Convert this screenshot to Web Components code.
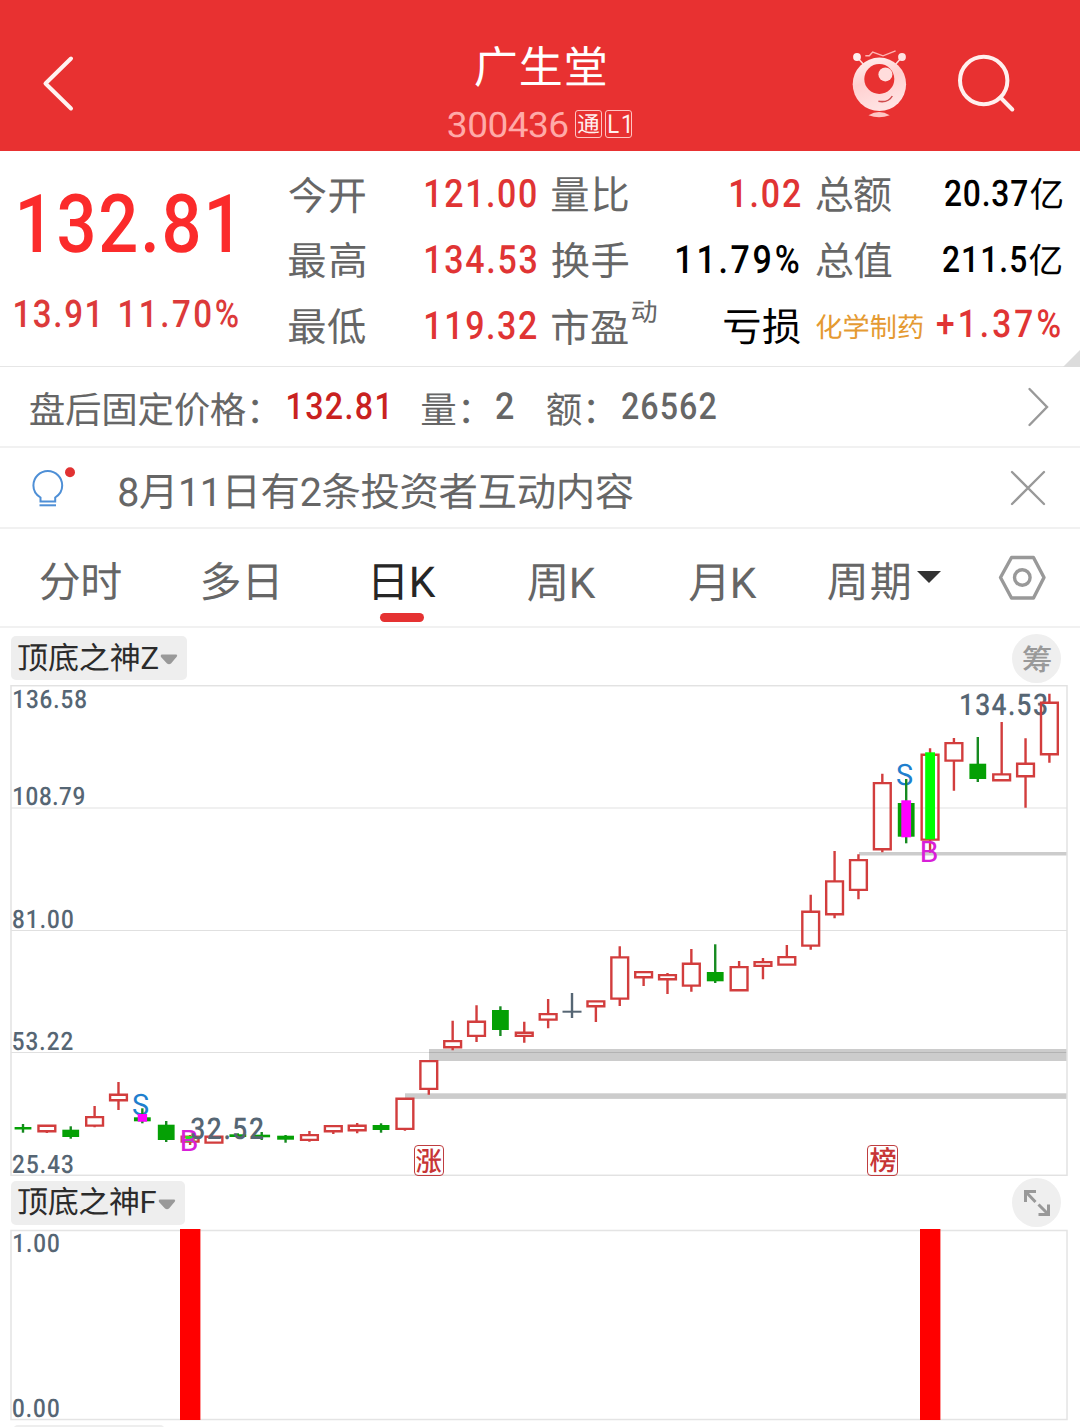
<!DOCTYPE html>
<html lang="zh-CN">
<head>
<meta charset="utf-8">
<title>广生堂 300436</title>
<style>
html,body{margin:0;padding:0;background:#fff}
body{width:1080px;height:1427px;overflow:hidden;font-family:Roboto,"Noto Sans CJK SC",sans-serif}
</style>
</head>
<body>
<stock-page></stock-page>
<script>
const FAMILY = 'Roboto,"Noto Sans CJK SC",sans-serif';
const pen = document.createElement('canvas').getContext('2d');

// A label whose box is the ink of its text: s = font size, w = ink width, sx = glyph condensation.
class FitText extends HTMLElement {
  connectedCallback() {
    const text = this.textContent, n = [...text].length;
    const s = +this.getAttribute('s'), w = +this.getAttribute('w');
    const wt = this.getAttribute('wt') || 400;
    let sx = +(this.getAttribute('sx') || 1);
    // measured large, so that rounding in the metrics stays below a pixel
    pen.font = `${wt} ${s * 10}px ${FAMILY}`;
    const m = pen.measureText(text);
    const left = m.actualBoundingBoxLeft / 10;
    const ink = left + m.actualBoundingBoxRight / 10;
    let ls = 0;
    if (n > 1) ls = (w / sx - ink) / (n - 1); else sx = w / ink;
    const up = m.actualBoundingBoxAscent / 10, h = up + m.actualBoundingBoxDescent / 10;
    const A = Math.round(.927734 * s), D = Math.round(.244141 * s);
    this.attachShadow({mode: 'open'}).innerHTML = `<style>
      :host{display:block;flex:none;width:${w}px;height:${h}px}
      span{display:block;width:max-content;white-space:nowrap;font:${wt} ${s}px/${A + D}px ${FAMILY};letter-spacing:${ls}px;
        text-rendering:geometricPrecision;transform-origin:0 0;transform:translate(${left * sx}px,${up - A}px) scaleX(${sx})}
    </style><span><slot></slot></span>`;
  }
}

const define = (name, html) => customElements.define(name, class extends HTMLElement {
  connectedCallback() {
    if (this.shadowRoot) return;
    const t = document.createElement('template');
    t.innerHTML = html;
    this.attachShadow({mode: 'open'}).append(t.content.cloneNode(true));
  }
});
customElements.define('fit-text', FitText);

define('app-header', `<style>
:host{display:grid;grid-template-columns:1fr auto 1fr;height:151px;background:#e83131;color:#fff}
.back{padding:54px 0 0 41px}
.mid{display:flex;flex-direction:column;align-items:center;justify-content:space-between;padding-top:45.500px;height:138px;box-sizing:border-box}
.code{display:flex;align-items:center;gap:3px;color:#ffaaa8}
.code>fit-text:first-child{margin-right:5px}
.tag{box-sizing:border-box;width:27px;height:28px;border:1px solid #ffc4c2;border-radius:3px;display:flex;align-items:center;justify-content:center;color:#fff2f0}
.tag fit-text{margin-top:1.500px}
.icons{display:flex;justify-content:flex-end;gap:48px;padding:48px 63px 0 0}
svg{display:block}
</style>
<div class="back"><svg width="36" height="60" viewBox="0 0 36 60" fill="none" stroke="#fff3f1" stroke-width="4" stroke-linecap="round" stroke-linejoin="round"><path d="M30 4.5 4.5 29.5 30 54.5"/></svg></div>
<div class="mid"><fit-text s="44" w="130">广生堂</fit-text>
<div class="code"><fit-text s="35" w="119.5" sx="1.06">300436</fit-text><span class="tag"><fit-text s="22" w="21">通</fit-text></span><span class="tag"><fit-text s="26" w="20" sx=".85">L1</fit-text></span></div></div>
<div class="icons">
<svg width="56" height="71" viewBox="12 8 56 71" fill="none">
<defs><linearGradient id="g" x1="0" y1="0" x2=".3" y2="1"><stop offset="0" stop-color="#fff3f2"/><stop offset=".5" stop-color="#ffd0d0"/><stop offset="1" stop-color="#ffe2e2"/></linearGradient></defs>
<path d="M17 17l7 8M62 17l-7 8" stroke="#ffd9d8" stroke-width="1.6"/><circle cx="17" cy="17" r="3.9" fill="#fff0ef"/><circle cx="62" cy="17" r="3.9" fill="#ffe3e2"/>
<path d="M25.3 15.8h4l3.4-3.7L43 15.8l12.6-5" stroke="#ffb5b3" stroke-width="1.4"/>
<circle cx="39.4" cy="44.3" r="26.7" fill="url(#g)"/><circle cx="39.3" cy="39" r="15" fill="#e83131"/><circle cx="45.4" cy="34.4" r="7" fill="#ffdddc"/>
<path d="M38.4 61.3c6 1 11.500-1 13.900-5.300" stroke="#cf4b4d" stroke-width="1.5"/><path d="M28.500 75.200q10.700-6.500 21.200 0-10.600 4-21.200 0z" fill="#ffc5c4"/></svg>
<svg width="61" height="71" viewBox="116 8 61 71" fill="none" stroke="#fff0ee" stroke-width="4" stroke-linecap="round"><circle cx="143.700" cy="40.500" r="23.700"/><path d="M160.500 57.500 172.300 69.500"/></svg>
</div>`);

define('quote-stat', `<style>
:host{display:flex;justify-content:space-between;align-items:center;height:66px}
.l{padding-top:4px;color:#666;display:flex;align-items:center}
</style><div class="l"><slot name="label"></slot></div><slot></slot>`);

define('quote-panel', `<style>
:host{display:flex;height:216px;position:relative;color:#e03434;border-bottom:1px solid #e6e6e6;box-sizing:border-box}
.now{width:289px;display:flex;flex-direction:column;padding:42px 0 0 20px;box-sizing:border-box;color:#fb2b2b}
.chg{display:flex;gap:22.500px;margin:46.500px 0 0 -5px;color:#dc3a3a}
.grid{display:grid;grid-template-columns:247px 248px 246px;column-gap:16px;grid-auto-rows:66px;padding-top:8.500px}
.k{color:#000}.i{color:#e59a32}.d{align-self:flex-start;margin:-7px 0 0 4px}.t{margin-top:4px}
.v{display:flex;align-items:center;gap:2.500px;color:#000}.v>:last-child{margin-top:1px}
.corner{position:absolute;right:0;bottom:-1px;width:17px;height:17px;background:#dcdcdc;clip-path:polygon(100% 0,100% 100%,0 100%)}
</style>
<div class="now"><fit-text s="81" w="211" wt="500" sx=".87">132.81</fit-text>
<div class="chg"><fit-text s="38" w="82.500" wt="500" sx=".87">13.91</fit-text><fit-text s="38" w="118" wt="500" sx=".87">11.70%</fit-text></div></div>
<div class="grid">
<quote-stat><fit-text slot="label" s="39.300" w="76">今开</fit-text><fit-text s="39" w="110" wt="500" sx=".87">121.00</fit-text></quote-stat>
<quote-stat><fit-text slot="label" s="39.300" w="76">量比</fit-text><fit-text s="39" w="69" wt="500" sx=".87">1.02</fit-text></quote-stat>
<quote-stat><fit-text slot="label" s="39.300" w="75.500">总额</fit-text><div class="v"><fit-text s="36.500" w="82" wt="500" sx=".87">20.37</fit-text><fit-text s="35" w="32.500">亿</fit-text></div></quote-stat>
<quote-stat><fit-text slot="label" s="39.300" w="76">最高</fit-text><fit-text s="39" w="110" wt="500" sx=".87">134.53</fit-text></quote-stat>
<quote-stat><fit-text slot="label" s="39.300" w="76">换手</fit-text><fit-text class="k" style="margin-right:2px" s="39" w="121.500" wt="500" sx=".87">11.79%</fit-text></quote-stat>
<quote-stat><fit-text slot="label" s="39.300" w="75.500">总值</fit-text><div class="v" style="margin-right:1px"><fit-text s="36.500" w="83" wt="500" sx=".87">211.5</fit-text><fit-text s="35" w="32.500">亿</fit-text></div></quote-stat>
<quote-stat><fit-text slot="label" s="39.300" w="76">最低</fit-text><fit-text s="39" w="110" wt="500" sx=".87">119.32</fit-text></quote-stat>
<quote-stat><fit-text slot="label" s="39.300" w="76">市盈</fit-text><fit-text slot="label" class="d" s="25.500" w="24">动</fit-text><fit-text class="k t" s="39.300" w="76">亏损</fit-text></quote-stat>
<quote-stat><fit-text slot="label" class="i" s="27.200" w="107">化学制药</fit-text><fit-text style="margin-right:2px" s="38.500" w="123" wt="500" sx=".87">+1.37%</fit-text></quote-stat>
</div><i class="corner"></i>`);

define('after-hours', `<style>
:host{display:flex;align-items:center;height:81px;box-sizing:border-box;border-bottom:2px solid #f1f1f1;padding:0 31px 0 30px;color:#666}
.c{margin-top:5px}svg{margin-left:auto}
</style>
<fit-text class="c" s="36.500" w="228">盘后固定价格：</fit-text><fit-text style="margin-left:30px;color:#c9211f" s="37" w="99" wt="500" sx=".87">132.81</fit-text>
<fit-text class="c" style="margin-left:35px" s="36.500" w="47">量：</fit-text><fit-text style="margin-left:27px" s="37" w="17" wt="500">2</fit-text>
<fit-text class="c" style="margin-left:34px" s="36.500" w="47">额：</fit-text><fit-text style="margin-left:28px" s="37" w="93.500" wt="500" sx=".87">26562</fit-text>
<svg width="22" height="40" viewBox="0 0 22 40" fill="none" stroke="#999" stroke-width="2.400" stroke-linecap="round"><path d="M2.500 2 20 20 2.500 38"/></svg>`);

define('notice-bar', `<style>
:host{display:flex;align-items:center;height:81px;box-sizing:border-box;border-bottom:2px solid #f1f1f1;padding:0 34px 0 31px;color:#666}
fit-text{margin:7px 0 0 42px}.x{margin-left:auto}
</style>
<svg width="46" height="42" viewBox="0 0 46 42" fill="none" stroke="#4e8fd6" stroke-width="2"><path d="M9.500 34.500V30.500C4.500 27.500 2.400 23 2.400 18.500a14.400 14.400 0 0 1 28.800 0c0 4.500-2.100 9-7 12v4z"/><path d="M8.500 38.300h16.500"/><circle cx="39" cy="5.200" r="5" fill="#e13232" stroke="none"/></svg>
<fit-text s="39.400" w="514">8月11日有2条投资者互动内容</fit-text>
<svg class="x" width="36" height="36" viewBox="0 0 36 36" fill="none" stroke="#999" stroke-width="2.300" stroke-linecap="round"><path d="M2 2l32 32M34 2 2 34"/></svg>`);

define('period-tabs', `<style>
:host{display:flex;height:99px;box-sizing:border-box;border-bottom:2px solid #f1f1f1;padding:33.500px 34px 0 40px;color:#666}
.on{color:#262626;display:flex;flex-direction:column;align-items:center}
.on i{width:44px;height:9px;border-radius:5px;background:#e53232;margin:auto 6px 4px 0}
.k{margin-top:2px}
.more{display:flex;gap:8px}.more svg{margin-top:8.500px}.set{margin:-15px 0 0 auto}
</style>
<fit-text s="42" w="81">分时</fit-text>
<fit-text style="margin-left:81px" s="42" w="75">多日</fit-text>
<div class="on" style="margin-left:97px"><fit-text class="k" s="42.500" w="62">日K</fit-text><i></i></div>
<fit-text class="k" style="margin-left:92px" s="42.500" w="68">周K</fit-text>
<fit-text class="k" style="margin-left:93px" s="42.500" w="68">月K</fit-text>
<div class="more" style="margin-left:71px"><fit-text s="42" w="81">周期</fit-text><svg width="24" height="12"><path d="M0 0H24L12 12z" fill="#333"/></svg></div>
<svg class="set" width="48" height="60" viewBox="0 0 48 60" fill="none" stroke="#999" stroke-width="3.400" stroke-linejoin="round"><path d="M13.500 9.500h22L46 29.500l-10.500 20.500h-22L2.500 29.500z"/><circle cx="24.300" cy="29.500" r="7.800"/></svg>`);

define('indicator-bar', `<style>
:host{display:flex;justify-content:space-between;align-items:center;padding:0 19px 0 11px;box-sizing:border-box}
.chip{display:flex;align-items:center;height:44px;background:#eee;border-radius:5px;padding:0 9px 0 7px;gap:2px;color:#2b2b2b}
.chip svg{margin-top:3px}.dot{width:49px;height:49px;border-radius:50%;background:#efefef;display:flex;align-items:center;justify-content:center;color:#999}
</style>
<div class="chip"><slot></slot><svg width="18" height="11"><path d="M1.500 .5h15q1.500 1 0 2.500L11 9.500q-2 1.500-4 0L1 3Q0 1.500 1.500 .5z" fill="#999"/></svg></div>
<div class="dot"><slot name="tool"></slot></div>`);

const STEP = 23.87, X0 = 23;
// [colour, body top, body bottom, high, low]
const CANDLES = [
['g',1127,1129.5,1124,1132.7],['r',1124.7,1132.3,1124.7,1133],['g',1129.7,1137,1126.3,1138.7],['r',1116,1126.7,1106,1127.3],['r',1093.7,1101.3,1082,1110],
['g',1117.3,1121.3,1108.3,1123.3],['g',1124.7,1140,1121,1142],['r',1135.7,1142.7,1135,1145],['r',1135.7,1143.7,1135.7,1143.7],['g',1134.3,1137,1133.3,1137.3],
['g',1134.7,1137.3,1132,1140],['g',1135.7,1139.7,1135,1142.7],['r',1134,1141,1131,1141.7],['r',1125,1132.3,1125,1134],['r',1124.7,1131.3,1123,1133.3],
['g',1125,1130,1123.3,1132.7],['r',1097.7,1130,1097.7,1130.7],['r',1060,1090,1060,1094.7],['r',1040,1048.3,1020.7,1050.3],['r',1020.7,1037,1005.3,1042],
['g',1010,1030,1006.3,1036],['r',1031.7,1037,1021.7,1042.7],['r',1013,1020.7,999,1028.3],['d',1010.700,1012.700,993,1018],['r',1000.3,1007.3,1000.3,1022],
['r',956.3,999.7,946.3,1006],['r',971,978.3,971,986],['r',974,980.3,973,994],['r',962.7,986.7,949,991.7],['g',972,981.3,944.3,983],
['r',966,991.3,961,991.3],['r',961,967,958,979.3],['r',956,965.7,945,965.7],['r',910.7,946.7,894.7,949.7],['r',880.3,915.3,851,918.3],
['r',859,891,854.3,899.3],['r',782,850.3,773.7,852.3],['g',803,836.7,779,843.3],['r',753.7,840.7,748.3,852.7],['r',742,761.7,738,790.7],
['g',763.7,779,737,782],['r',773.3,781.3,722,781.3],['r',762.7,777.3,738.3,807.7],['r',701.7,755.3,693.7,762.7]];

customElements.define('candle-chart', class extends HTMLElement {
  connectedCallback() {
    const body = CANDLES.map(([c, t, b, hi, lo], i) => {
      const x = X0 + STEP * i;
      if (c === 'r') return `<path d="M${x} ${hi}V${t}M${x} ${b}V${lo}M${x-8.4} ${t+1.1}H${x+8.4}V${b-1.1}H${x-8.4}z" fill="none" stroke="#d23d3d" stroke-width="2.4"/>`;
      const col = c === 'g' ? '#05a005' : '#566674', hw = c === 'g' ? 8.4 : 9.5;
      return `<path d="M${x} ${hi}V${lo}" stroke="${c === 'g' ? '#168a20' : col}" stroke-width="2.4"/><rect x="${x-hw}" y="${t}" width="${2*hw}" height="${b-t}" fill="${col}"/>`;
    }).join('');
    const L = (x, y, s, w, t, extra = '', wt = 500) => `<fit-text style="left:${x}px;top:${y - 685}px;${extra}" s="${s}" w="${w}" sx=".88" wt="${wt}">${t}</fit-text>`;
    const flag = (x, t) => `<span class="flag" style="left:${x}px"><fit-text class="in" s="27" w="25.500" wt="500">${t}</fit-text></span>`;
    this.attachShadow({mode: 'open'}).innerHTML = `<style>
    :host{display:block;position:relative;height:491px;color:#566674}
    svg{position:absolute;left:0;top:0}fit-text:not(.in){position:absolute}
    .flag{position:absolute;top:460px;box-sizing:border-box;width:30.500px;height:30.500px;border:1.500px solid #bf3e40;border-radius:4px;display:flex;align-items:center;justify-content:center;color:#c73536}
    </style>
    <svg width="1080" height="491" viewBox="0 685 1080 491">
    <path d="M859 853.700H1067" stroke="#ccc" stroke-width="3.600"/><rect x="429" y="1049" width="638" height="12" fill="#ccc"/><rect x="405" y="1093.300" width="662" height="5.600" fill="#ccc"/>
    <path d="M11 808H1067M11 930.500H1067M11 1052.500H1067" stroke="#000" stroke-opacity=".12" stroke-width="1.200"/>
    <rect x="11" y="685.700" width="1056" height="489.600" fill="none" stroke="#e2e2e2" stroke-width="1.500"/></svg>
    ${L(14,690.5,25.5,72,'136.58')}${L(14,787.5,25.5,70,'108.79')}${L(13,910.5,25.5,59.500,'81.00')}${L(13,1032.5,25.5,59.500,'53.22')}${L(13,1155.5,25.5,59.500,'25.43')}
    ${L(960.7,694.2,30,85.5,'134.53')}
    ${L(897,764.3,29.5,15.3,'S','color:#1f7fce',400)}${L(132.7,1094.3,29.5,15.3,'S','color:#1f7fce',400)}
    <svg width="1080" height="491" viewBox="0 685 1080 491">${body}
    <rect x="901.300" y="800.300" width="9.800" height="37" fill="#f0f"/><rect x="925.200" y="752.300" width="9.800" height="87" fill="#0f0"/>
    <rect x="137.700" y="1114" width="9.400" height="7.700" fill="#f0f"/><rect x="185.300" y="1136" width="9.400" height="6" fill="#2fdc1e"/></svg>
    ${L(922.3,842,29.5,15.3,'B','color:#d81fd8',400)}${L(182.3,1130.8,29.5,15.3,'B','color:#d81fd8',400)}
    ${L(190.500,1118.4,30,72,'32.52')}
    ${flag(413.5,'涨')}${flag(867,'榜')}`;
  }
});

define('signal-chart', `<style>
:host{display:block;position:relative;height:192px;color:#566674}svg{position:absolute;left:0;top:0}
fit-text{position:absolute;left:14px}
</style>
<svg width="1080" height="192" viewBox="0 1229 1080 192"><rect x="11" y="1230.500" width="1056" height="189" fill="none" stroke="#e4e4e4" stroke-width="1.500"/><path d="M180 1229h20.400v191H180zM920 1229h20.400v191H920z" fill="#f00"/></svg>
<fit-text style="top:5.500px" s="25.500" w="44.500" sx=".88" wt="500">1.00</fit-text><fit-text style="top:170.500px;left:13px" s="25.500" w="45.500" sx=".88" wt="500">0.00</fit-text>`);

define('stock-page', `<style>
:host{display:flex;flex-direction:column;width:1080px;height:1427px;overflow:hidden;background:#fff}
:host>*{flex:none}
.a{height:57px;padding-top:3px}.b{height:53px}
.name{margin-bottom:3px}.tool{margin-top:3px}
.next{width:152px;height:20px;margin:4px 0 0 13px;background:#eee;border-radius:5px}
</style>
<app-header></app-header><quote-panel></quote-panel><after-hours></after-hours><notice-bar></notice-bar><period-tabs></period-tabs>
<indicator-bar class="a"><fit-text class="name" s="31" w="140">顶底之神Z</fit-text><fit-text class="tool" slot="tool" s="29" w="28" wt="500">筹</fit-text></indicator-bar>
<candle-chart></candle-chart>
<indicator-bar class="b"><fit-text class="name" s="31" w="138">顶底之神F</fit-text><svg slot="tool" width="26" height="26" viewBox="0 0 26 26" fill="none" stroke="#999" stroke-width="3"><path d="M1.500 12V1.500H12M2 2l9.500 10M24.500 14.500V24.500H14.500M24 24 14.500 14.500"/></svg></indicator-bar>
<signal-chart></signal-chart><div class="next"></div>`);
</script>
</body>
</html>
